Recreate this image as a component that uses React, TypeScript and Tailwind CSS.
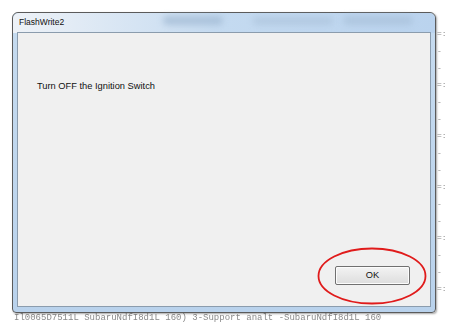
import React from "react";

// blurred console text peeking out behind the dialog
const BACK_LINE = "Il0065D7511L SubaruNdfI8d1L 160)  3-Support analt  -SubaruNdfI8d1L 160";

export default function App() {
  return (
    <div className="relative w-[451px] h-[331px] overflow-hidden bg-white font-['Liberation_Sans',Arial,sans-serif]">
      {/* background text under the window */}
      <div className="absolute left-[14px] top-[313px] text-[9px] leading-[10px] text-[#8a8a8a] font-['Liberation_Mono',monospace] blur-[0.5px] whitespace-nowrap">
        {BACK_LINE}
      </div>
      <div className="absolute left-[437px] top-[30px] flex flex-col gap-[9px] text-[8px] leading-[8px] text-[#8a8a8a] font-['Liberation_Mono',monospace] blur-[0.4px]">
        {Array.from({ length: 16 }).map((_, i) => (
          <span key={i}>{i % 3 === 0 ? "=:" : "-"}</span>
        ))}
      </div>

      {/* dialog window */}
      <div className="relative ml-[12px] mt-[12px] w-[424px] h-[301px] rounded-t-[6px] rounded-b-[4px] border border-[#5b5b5b] bg-gradient-to-b from-[#c6dbef] to-[#b9d2ec] flex flex-col px-[4px] pb-[5px] shadow-[1px_1px_2px_rgba(0,0,0,0.35)]">
        <div className="absolute inset-x-0 top-0 h-[20px] rounded-t-[6px] bg-gradient-to-r from-[#eef2f7] via-[#c4daf0] to-[#bad3ee]" />
        <div className="absolute left-[150px] top-[3px] w-[60px] h-[9px] rounded-full bg-[#9fb8d2] blur-[3px] opacity-70" />
        <div className="absolute left-[240px] top-[4px] w-[80px] h-[8px] rounded-full bg-[#a9c0d8] blur-[3px] opacity-60" />
        <div className="absolute left-[330px] top-[3px] w-[70px] h-[9px] rounded-full bg-[#a5bdd6] blur-[3px] opacity-60" />

        <div className="relative h-[19px] flex items-center pl-[2px] text-[8.5px] text-[#111]">
          FlashWrite2
        </div>

        <div className="relative flex-1 bg-[#f0f0f0] border border-[#8b9cad] flex flex-col">
          <div className="pl-[19px] pt-[47px] text-[9.3px] text-[#111]">
            Turn OFF the Ignition Switch
          </div>
          <div className="mt-auto flex justify-end pr-[20px] pb-[21px]">
            <button className="relative w-[75px] h-[19px] rounded-[2px] border border-[#707070] bg-gradient-to-b from-[#f3f3f3] to-[#dddddd] text-[9.3px] text-[#111] shadow-[inset_0_0_0_1px_#fcfcfc]">
              OK
              <svg
                className="absolute left-[-19px] top-[-20px] overflow-visible"
                width="110"
                height="58"
                viewBox="0 0 110 58"
              >
                <ellipse
                  cx="55"
                  cy="29"
                  rx="53.5"
                  ry="27.5"
                  fill="none"
                  stroke="#e01b1b"
                  strokeWidth="1.8"
                />
              </svg>
            </button>
          </div>
        </div>
      </div>
    </div>
  );
}
